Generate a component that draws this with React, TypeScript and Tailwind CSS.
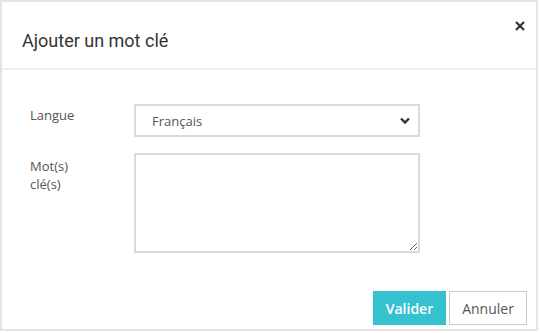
export default function App() {
    return (
        <div className="h-[333px] w-[540px] bg-white" style={{ fontFamily: '"Open Sans", sans-serif' }}>
            <div className="flex h-[331px] w-[538px] flex-col border-2 border-[#e4e4e4] bg-white">
                <div className="flex h-[68px] shrink-0 items-start justify-between border-b-2 border-[#efefef] pl-5 pr-[11px]">
                    <h2 className="mt-[27px] text-[18px] leading-6 text-[#333]" style={{ fontFamily: "Roboto, sans-serif" }}>
                        Ajouter un mot clé
                    </h2>
                    <button type="button" className="mt-[19px] flex h-[10px] w-[10px] items-center justify-center">
                        <svg viewBox="0 0 10 10" className="h-[10px] w-[10px]">
                            <path d="M1 1 L9 9 M9 1 L1 9" stroke="#333" strokeWidth="2.2" />
                        </svg>
                    </button>
                </div>

                <div className="flex flex-1 flex-col pl-[28px] pt-[34px]">
                    <div className="flex items-start">
                        <label className="w-[104px] pt-[2px] text-[13px] leading-[18px] text-[#555]">Langue</label>
                        <div className="flex h-[33px] w-[286px] items-center justify-between border-2 border-[#d6dae6] pl-[16px] pr-[8px] text-[13px] text-[#555]">
                            <span className="pt-[2px]">Français</span>
                            <svg viewBox="0 0 10 8" className="h-[8px] w-[10px]">
                                <path d="M1 1.5 L5 5.5 L9 1.5" fill="none" stroke="#333" strokeWidth="2.4" />
                            </svg>
                        </div>
                    </div>

                    <div className="mt-[16px] flex items-start">
                        <label className="w-[104px] pt-[4px] text-[13px] leading-[18px] text-[#555]">
                            Mot(s)
                            <br />
                            clé(s)
                        </label>
                        <textarea className="h-[100px] w-[286px] border-2 border-[#d6dae6] px-3 py-2 text-[13px] text-[#555] outline-none" />
                    </div>

                    <div className="mt-[38px] flex justify-end gap-[3px] pr-[9px]">
                        <button
                            type="button"
                            className="h-[34px] w-[73px] bg-[#35c1ce] text-[14px] font-semibold text-white"
                        >
                            Valider
                        </button>
                        <button
                            type="button"
                            className="h-[34px] w-[78px] border border-[#cccccc] bg-white text-[14px] text-[#555]"
                        >
                            Annuler
                        </button>
                    </div>
                </div>
            </div>
        </div>
    );
}
